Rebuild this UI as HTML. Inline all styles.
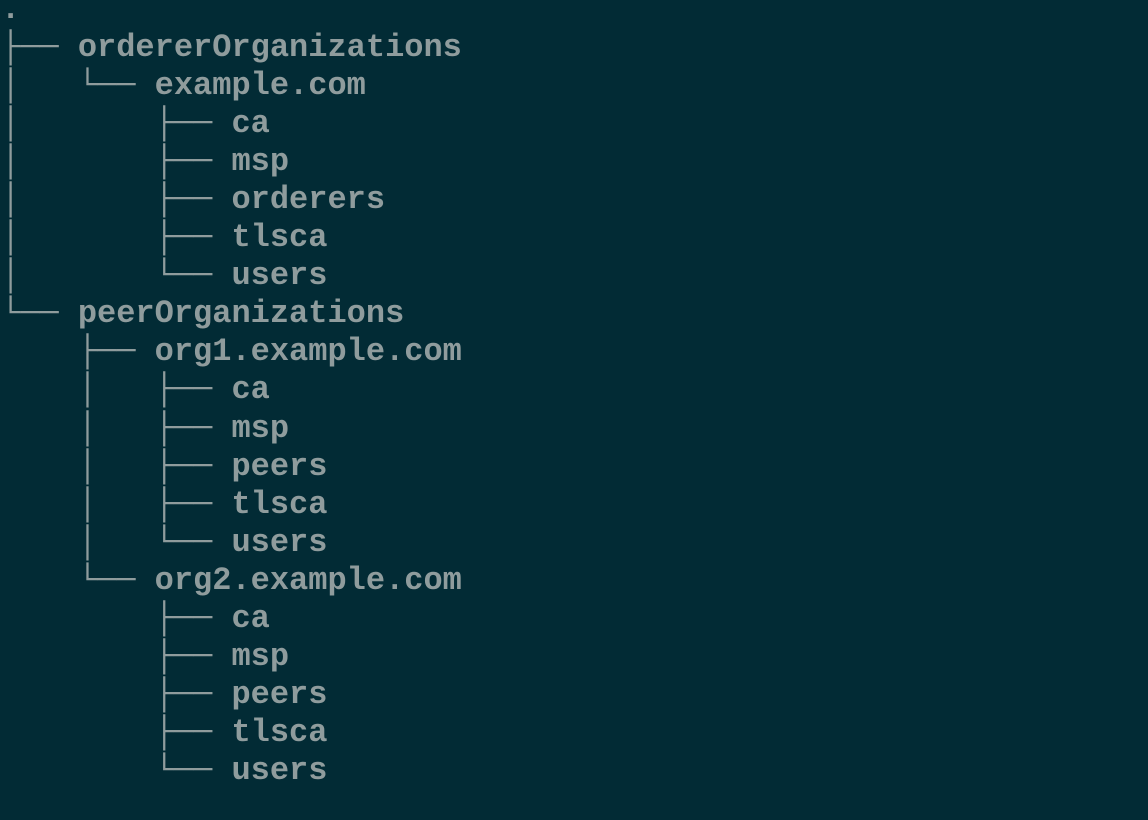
<!DOCTYPE html>
<html><head><meta charset="utf-8"><style>
html,body{margin:0;padding:0;background:#022b35;width:1148px;height:820px;overflow:hidden}
pre{margin:-9px 0 0 1px;font-family:"Liberation Mono","DejaVu Sans Mono",monospace;font-size:32px;line-height:38.05px;color:#8f9c9d;font-weight:bold}
b{font-weight:normal}
</style></head><body><pre>.
<b>├──</b> ordererOrganizations
<b>│   └──</b> example.com
<b>│       ├──</b> ca
<b>│       ├──</b> msp
<b>│       ├──</b> orderers
<b>│       ├──</b> tlsca
<b>│       └──</b> users
<b>└──</b> peerOrganizations
<b>    ├──</b> org1.example.com
<b>    │   ├──</b> ca
<b>    │   ├──</b> msp
<b>    │   ├──</b> peers
<b>    │   ├──</b> tlsca
<b>    │   └──</b> users
<b>    └──</b> org2.example.com
<b>        ├──</b> ca
<b>        ├──</b> msp
<b>        ├──</b> peers
<b>        ├──</b> tlsca
<b>        └──</b> users
</pre></body></html>
